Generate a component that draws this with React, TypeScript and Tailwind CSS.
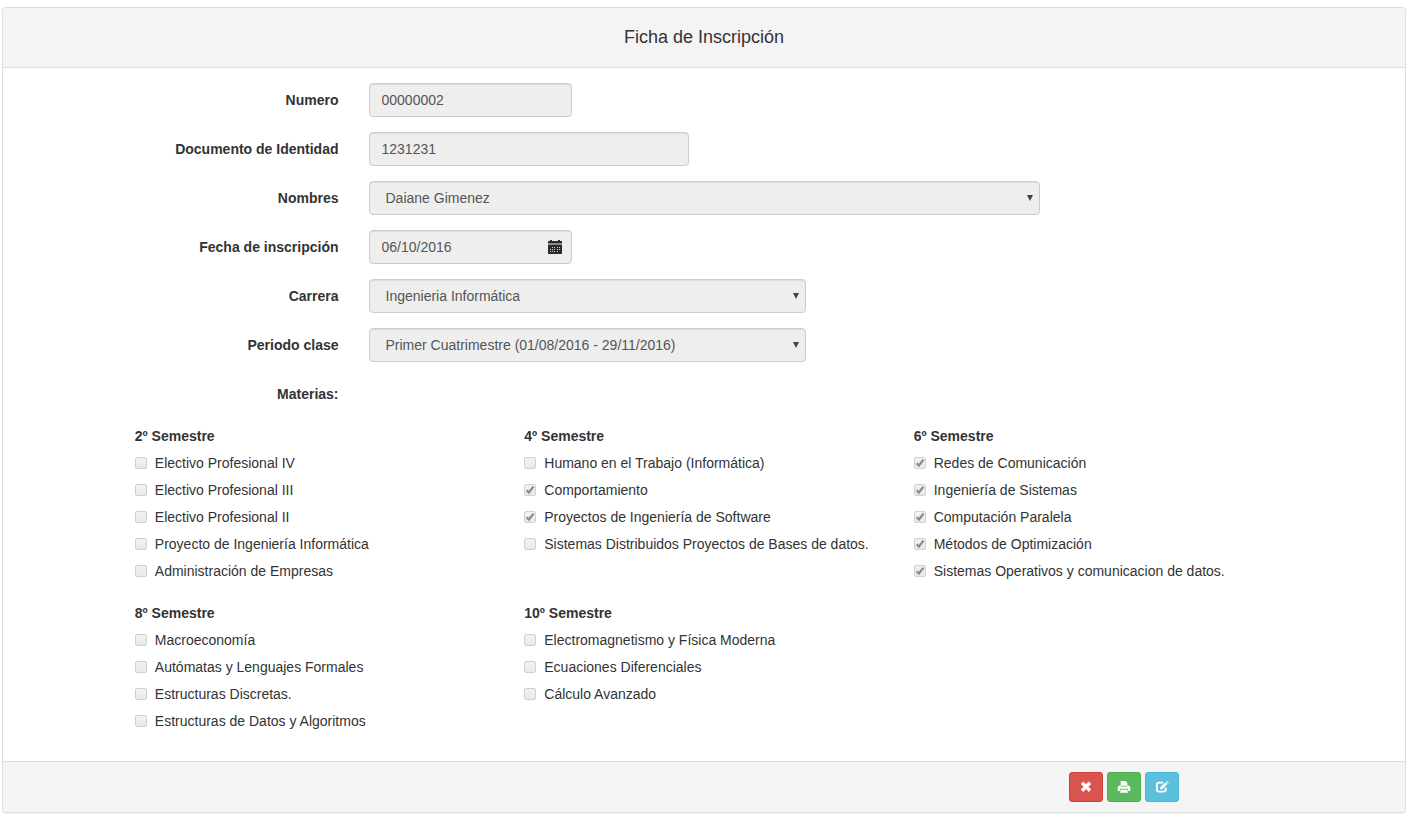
import React from 'react';

type Subject = { name: string; checked?: boolean };
type Semester = { title: string; subjects: Subject[] };

const semesters: Semester[] = [
  {
    title: '2º Semestre',
    subjects: [
      { name: 'Electivo Profesional IV' },
      { name: 'Electivo Profesional III' },
      { name: 'Electivo Profesional II' },
      { name: 'Proyecto de Ingeniería Informática' },
      { name: 'Administración de Empresas' },
    ],
  },
  {
    title: '4º Semestre',
    subjects: [
      { name: 'Humano en el Trabajo (Informática)' },
      { name: 'Comportamiento', checked: true },
      { name: 'Proyectos de Ingeniería de Software', checked: true },
      { name: 'Sistemas Distribuidos Proyectos de Bases de datos.' },
    ],
  },
  {
    title: '6º Semestre',
    subjects: [
      { name: 'Redes de Comunicación', checked: true },
      { name: 'Ingeniería de Sistemas', checked: true },
      { name: 'Computación Paralela', checked: true },
      { name: 'Métodos de Optimización', checked: true },
      { name: 'Sistemas Operativos y comunicacion de datos.', checked: true },
    ],
  },
  {
    title: '8º Semestre',
    subjects: [
      { name: 'Macroeconomía' },
      { name: 'Autómatas y Lenguajes Formales' },
      { name: 'Estructuras Discretas.' },
      { name: 'Estructuras de Datos y Algoritmos' },
    ],
  },
  {
    title: '10º Semestre',
    subjects: [
      { name: 'Electromagnetismo y Física Moderna' },
      { name: 'Ecuaciones Diferenciales' },
      { name: 'Cálculo Avanzado' },
    ],
  },
];

const control =
  'block h-[34px] w-full appearance-none rounded border border-[#ccc] bg-[#eee] text-sm text-[#555] opacity-100 shadow-[inset_0_1px_1px_rgba(0,0,0,0.075)]';

function Row({ id, label, span, children }: { id: string; label: string; span: string; children: React.ReactNode }) {
  return (
    <div className="grid grid-cols-12">
      <label htmlFor={id} className="col-span-3 px-[15px] pt-[7px] text-right font-bold">
        {label}
      </label>
      <div className={`${span} px-[15px]`}>
        <div className="relative">{children}</div>
      </div>
    </div>
  );
}

function SelectBox({ id, value }: { id: string; value: string }) {
  return (
    <>
      <select id={id} disabled className={`${control} pr-6 pl-4`}>
        <option>{value}</option>
      </select>
      <svg className="pointer-events-none absolute top-[14px] right-[7px]" width="6" height="6" viewBox="0 0 6 6" aria-hidden="true">
        <path d="M0 0h6L3 6z" fill="#444" />
      </svg>
    </>
  );
}

function CalendarIcon() {
  return (
    <svg className="pointer-events-none absolute top-[10px] right-[10px]" width="14" height="14" viewBox="0 0 14 14" aria-hidden="true">
      <path d="M2 0h2v1h6V0h2v1h1.500l.5.500V3H0V1.500L.5 1H2z" fill="#2b2b2b" />
      <path d="M0 3h14v2H0z" fill="#8a8a8a" />
      <path d="M0 5h14v8.500l-.5.500H.5l-.5-.5z" fill="#2b2b2b" />
      <path
        d="M4 7h1v1H4zM6 7h1v1H6zM9 7h1v1H9zM11 7h1v1h-1zM2 9h1v1H2zM4 9h1v1H4zM6 9h1v1H6zM9 9h1v1H9zM11 9h1v1h-1zM2 11h1v1H2zM4 11h1v1H4zM6 11h1v1H6zM9 11h1v1H9z"
        fill="#ccc"
      />
    </svg>
  );
}

function SubjectCheck({ name, checked }: Subject) {
  return (
    <label className="mt-[7px] flex items-center gap-2">
      <span className="relative block size-3 shrink-0">
        <input
          type="checkbox"
          disabled
          defaultChecked={checked}
          className="block size-3 appearance-none rounded-[2px] border border-[#d0d0d0] bg-linear-to-b from-[#f2f2f2] to-[#e9e9e9]"
        />
        {checked && (
          <svg className="pointer-events-none absolute inset-0" width="12" height="12" viewBox="0 0 12 12" aria-hidden="true">
            <path d="M2.600 6.200 4.900 8.500 9.500 2.600" fill="none" stroke="#8c8c8c" strokeWidth="2.300" />
          </svg>
        )}
      </span>
      <span>{name}</span>
    </label>
  );
}

const actionButton = 'flex h-[30px] w-[34px] items-center justify-center rounded-[3px] border text-white';

export default function App() {
  return (
    <main className="pt-[7px] pr-[9px] pb-[6px] pl-[2px] font-['Liberation_Sans',Arial,sans-serif] text-sm leading-5 text-[#333]">
      <form className="rounded border border-[#ddd] bg-white shadow-[0_1px_1px_rgba(0,0,0,0.05)]">
        <header className="rounded-t-[3px] border-b border-[#ddd] bg-[#f4f4f4] pt-[19px] pb-[20px] text-center">
          <h1 className="text-lg leading-5">Ficha de Inscripción</h1>
        </header>

        <div className="flex flex-col gap-[15px] pt-[15px] pb-[30px]">
          <Row id="numero" label="Numero" span="col-span-2">
            <input id="numero" disabled defaultValue="00000002" className={`${control} px-3`} />
          </Row>
          <Row id="documento" label="Documento de Identidad" span="col-span-3">
            <input id="documento" disabled defaultValue="1231231" className={`${control} px-3`} />
          </Row>
          <Row id="nombres" label="Nombres" span="col-span-6">
            <SelectBox id="nombres" value="Daiane Gimenez" />
          </Row>
          <Row id="fecha" label="Fecha de inscripción" span="col-span-2">
            <input id="fecha" disabled defaultValue="06/10/2016" className={`${control} pr-8 pl-3`} />
            <CalendarIcon />
          </Row>
          <Row id="carrera" label="Carrera" span="col-span-4">
            <SelectBox id="carrera" value="Ingenieria Informática" />
          </Row>
          <Row id="periodo" label="Periodo clase" span="col-span-4">
            <SelectBox id="periodo" value="Primer Cuatrimestre (01/08/2016 - 29/11/2016)" />
          </Row>

          <div className="grid grid-cols-12">
            <h2 className="col-span-3 px-[15px] pt-[7px] text-right font-bold">Materias:</h2>
          </div>

          <div className="grid grid-cols-12 pt-[7px]">
            <div className="col-span-10 col-start-2 grid grid-cols-3 gap-y-[22px]">
              {semesters.map((semester) => (
                <fieldset key={semester.title} className="min-w-0 px-[15px]">
                  <legend className="font-bold">{semester.title}</legend>
                  {semester.subjects.map((subject) => (
                    <SubjectCheck key={subject.name} {...subject} />
                  ))}
                </fieldset>
              ))}
            </div>
          </div>
        </div>

        <footer className="grid grid-cols-12 rounded-b-[3px] border-t border-[#ddd] bg-[#f4f4f4] py-[10px]">
          <div className="col-span-3 col-start-10 flex gap-1 px-[14px]">
            <button type="button" aria-label="Cancelar" className={`${actionButton} border-[#d43f3a] bg-[#d9534f]`}>
              <svg width="12" height="12" viewBox="0 0 12 12" aria-hidden="true">
                <path d="M3.200.5 6 3.300 8.800.5 11.200 2.900 8.400 5.700l2.800 2.800-2.400 2.400L6 8.100l-2.800 2.800L.8 8.500 3.600 5.700.8 2.900z" fill="currentColor" />
              </svg>
            </button>
            <button type="button" aria-label="Imprimir" className={`${actionButton} border-[#4cae4c] bg-[#5cb85c]`}>
              <svg width="14" height="12" viewBox="0 0 14 12" aria-hidden="true">
                <path d="M3.700 4.500V0h4.800l1.800 1.800v2.700h1.200L13.300 6v4h-2.200l-.5-2.200H3.400L2.900 10H.7V6l1.800-1.500z" fill="currentColor" />
                <path d="M3.800 8.800h6.400l.8 3H3z" fill="currentColor" />
                <path d="M3.700 4.800h6.600v.8H3.700z" fill="#5cb85c" />
              </svg>
            </button>
            <button type="button" aria-label="Editar" className={`${actionButton} border-[#46b8da] bg-[#5bc0de]`}>
              <svg width="14" height="12" viewBox="0 0 14 12" aria-hidden="true">
                <path d="M8.300 1.600H4Q1.900 1.600 1.900 3.700v4.900q0 2 2 2h4.700q2 0 2-2V6.800" fill="none" stroke="currentColor" strokeWidth="1.900" />
                <path d="M5 8.500l.6-2.700 5-4.500 1.800 1.700-4.600 4.800z" fill="currentColor" />
                <path d="M11.300.7l.7-.7 1.800 1.700-.8.800z" fill="currentColor" />
              </svg>
            </button>
          </div>
        </footer>
      </form>
    </main>
  );
}
